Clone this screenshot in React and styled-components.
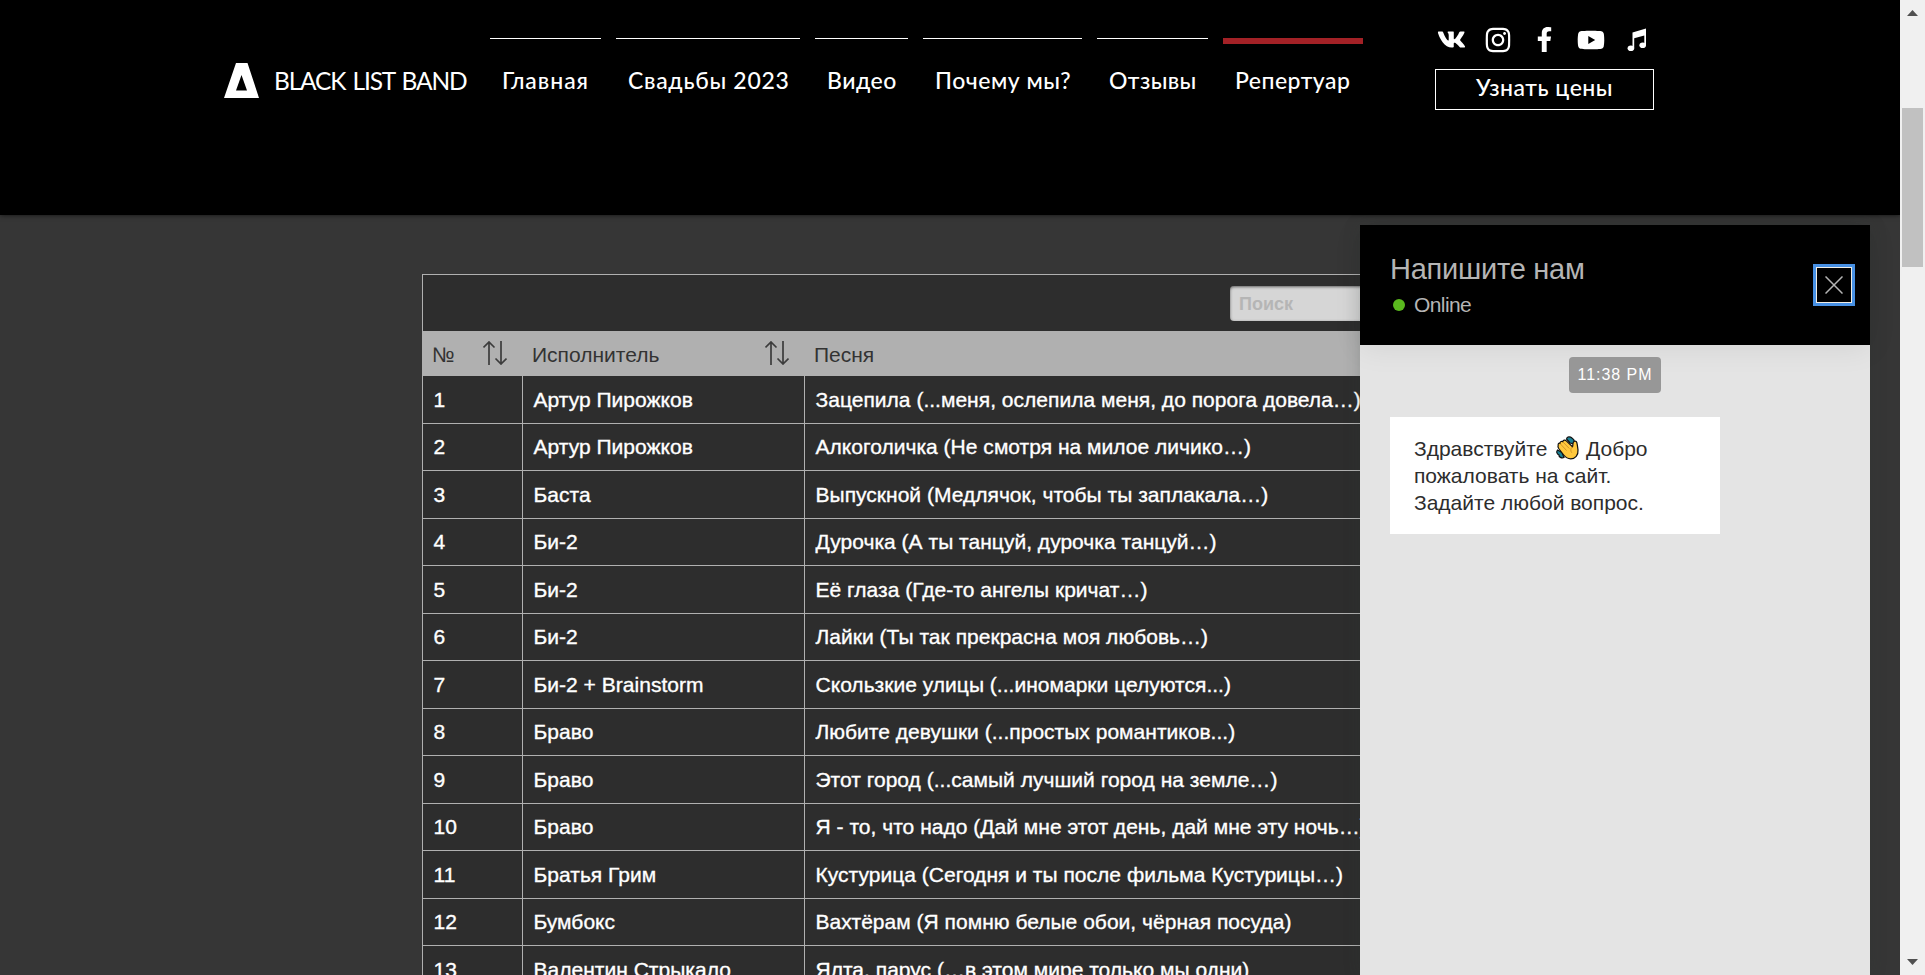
import React from "react";
import styled, { createGlobalStyle } from "styled-components";
import { FaVk, FaInstagram, FaFacebookF, FaYoutube } from "react-icons/fa";

const Global = createGlobalStyle`
  * { box-sizing: border-box; }
  body { margin: 0; overflow: hidden; background: #363636; font-family: "Liberation Sans", Arial, sans-serif; }
`;

const Window = styled.div`
  display: flex;
  position: relative;
  width: 100%;
  height: 975px;
  overflow: hidden;
`;
const Page = styled.div`
  flex: 1;
  min-width: 0;
  display: flex;
  flex-direction: column;
  background: #363636;
  overflow: hidden;
`;
const Header = styled.header`
  flex: none;
  height: 215px;
  display: flex;
  align-items: flex-start;
  padding-left: 224px;
  background: #000;
  color: #fff;
  box-shadow: 0 0 5px rgba(0, 0, 0, 0.7);
`;
const Brand = styled.div`
  display: flex;
  width: 266px;
  padding-top: 63px;
  gap: 15px;
`;
const BrandName = styled.span`
  font: 400 24.5px/36px Lato, sans-serif;
  letter-spacing: -1.15px;
  word-spacing: 2px;
  white-space: nowrap;
`;
const Nav = styled.nav`
  display: flex;
  gap: 15px;
  padding-top: 38px;
`;
const NavItem = styled.a`
  width: ${(p) => p.$w}px;
  height: 60px;
  border-top: ${(p) => (p.$active ? "6px solid #a32126" : "1px solid #fff")};
  padding: ${(p) => (p.$active ? 20 : 25)}px 0 0 12px;
  font: 500 23px/32px Lato, sans-serif;
  letter-spacing: ${(p) => p.$track}px;
  white-space: nowrap;
`;
const Aside = styled.div`
  width: 219px;
  margin-left: 72px;
  padding-top: 26px;
`;
const Socials = styled.div`
  display: flex;
  justify-content: space-between;
  height: 43px;
  padding: 0 2px 0 1px;
`;
const Social = styled.span`
  width: 30px;
  height: 27px;
  display: flex;
  align-items: center;
  justify-content: center;
`;
const PriceButton = styled.button`
  display: block;
  width: 219px;
  height: 41px;
  padding: 0 0 5px;
  border: 1px solid #fff;
  background: #000;
  color: #fff;
  font: 500 23px/32px Lato, sans-serif;
  letter-spacing: 0.5px;
`;

const Table = styled.section`
  width: 1056px;
  margin: 59px 0 0 422px;
  flex: none;
  border: 1px solid #b0b0b0;
  border-bottom: 0;
  background: #2d2d2d;
`;
const SearchBar = styled.div`
  height: 56px;
  display: flex;
  justify-content: flex-end;
  padding: 11px 11px 0 0;
`;
const SearchField = styled.div`
  width: 236px;
  height: 35px;
  border-radius: 4px;
  padding-left: 9px;
  background: #d6d6d6;
  box-shadow: inset 0 1px 3px rgba(0, 0, 0, 0.55);
  color: #b5b5b5;
  font: bold 18px/36px "Liberation Sans", Arial, sans-serif;
`;
const Columns = styled.div`
  display: grid;
  grid-template-columns: 100px 282px 1fr;
`;
const HeadRow = styled(Columns)`
  height: 45px;
  background: #b0b0b0;
  color: #333;
  font-size: 21px;
`;
const HeadCell = styled.div`
  display: flex;
  justify-content: space-between;
  padding: 10px 16px 0 9px;
  line-height: 28px;
`;
const Row = styled(Columns)`
  height: 47.5px;
  border-bottom: 1px solid #b0b0b0;
  color: #fff;
  font-size: 21px;
  line-height: 46px;
  &:nth-child(odd) { line-height: 47px; }
`;
const Cell = styled.div`
  border-right: 1px solid #b0b0b0;
  padding-left: 10.5px;
  letter-spacing: 0.02px;
  white-space: nowrap;
  overflow: hidden;
  -webkit-text-stroke: 0.35px #fff;
  &:last-child { border-right: 0; }
`;

const Chat = styled.aside`
  position: absolute;
  left: 1360px;
  top: 225px;
  width: 510px;
  height: 750px;
  background: #e4e4e4;
  box-shadow: 0 0 16px rgba(45, 56, 52, 0.2);
`;
const ChatHeader = styled.div`
  display: flex;
  justify-content: space-between;
  height: 120px;
  padding: 27px 18px 0 30px;
  background: #000;
  color: #b5b5b5;
  box-shadow: 0 4px 28px rgba(0, 0, 0, 0.07);
`;
const ChatTitle = styled.div`
  font-size: 29px;
  line-height: 34px;
  letter-spacing: -0.25px;
`;
const Status = styled.div`
  display: flex;
  align-items: center;
  gap: 9px;
  margin-top: 5px;
  padding-left: 3px;
  font-size: 21px;
  line-height: 28px;
  letter-spacing: -0.6px;
  &::before {
    content: "";
    width: 12px;
    height: 12px;
    border-radius: 50%;
    background: #5ab91e;
  }
`;
const Close = styled.button`
  width: 36px;
  height: 36px;
  margin-top: 15px;
  padding: 0;
  display: flex;
  align-items: center;
  justify-content: center;
  background: #000;
  border: 1px solid #f0ece4;
  box-shadow: 0 0 0 3px #4790e4;
`;
const Messages = styled.div`
  display: flex;
  flex-direction: column;
  align-items: flex-start;
  padding: 12px 30px;
`;
const Time = styled.span`
  align-self: center;
  width: 92px;
  height: 36px;
  border-radius: 4px;
  background: #979797;
  color: #fff;
  text-align: center;
  font-size: 16px;
  line-height: 36px;
  letter-spacing: 0.95px;
`;
const Bubble = styled.div`
  width: 330px;
  height: 117px;
  margin-top: 24px;
  padding: 18px 24px;
  background: #fff;
  color: #2d2d2d;
  font-size: 21px;
  line-height: 27px;
  white-space: nowrap;
`;
const WaveIcon = styled.svg`
  vertical-align: -4px;
  margin: 0 1px 0 3px;
`;

const Scrollbar = styled.div`
  width: 25px;
  display: flex;
  flex-direction: column;
  align-items: center;
  background: #f0f0f0;
  padding: 10px 0;
`;
const Thumb = styled.div`
  width: 21px;
  height: 159px;
  margin: 92px 0 auto;
  background: #c1c1c1;
`;

const Logo = () => (
  <svg width="35" height="36" viewBox="0 0 35 36">
    <path fill="#fff" fillRule="evenodd" d="M12 0h11.500l11.500 35H0zM17.500 12l-5.500 15.500h11z" />
  </svg>
);
const SortArrows = () => (
  <svg width="24" height="24" viewBox="0 0 24 24" fill="none" stroke="#3c3c3c" strokeWidth="1.700">
    <path d="M6 24V1M.5 6.500L6 1l5.500 5.500M18 0v23M12.500 17.500L18 23l5.500-5.500" />
  </svg>
);
const Notes = () => (
  <svg width="20" height="24" viewBox="0 0 20 24" fill="#fff">
    <path d="M5.500 4.500L19 .5V17h-1.700V7.500L7.200 10.300V20H5.500z" />
    <ellipse cx="3.900" cy="20.300" rx="3.300" ry="2.800" />
    <ellipse cx="15.700" cy="17.200" rx="3.300" ry="2.800" />
  </svg>
);
const Wave = () => (
  <WaveIcon width="23" height="24" viewBox="0 0 23 24">
    <path fill="#1b8296" stroke="#111" strokeWidth="1.200" d="M10.500 3C11 .5 14 .3 16 2c2 1.300 3 3.500 2 6l-4-1zM1.500 14c-1.500 2-.5 4 1.500 5-.3 2 2.500 3.500 5 2.500l-2-5z" />
    <path fill="#ffc83d" stroke="#111" strokeWidth="1.200" strokeLinejoin="round" d="M2.200 9C1.800 7.500 3 6.800 4 7.500 3.800 5.800 5.300 4.800 6.700 5.700 7 4 9 3.500 10.300 4.800l6.200 6c.6-1.500.2-3 .8-4.500.8-1.800 3-1.500 3.500.2.6 2 .9 5 1.200 7.500.5 5-2.800 8.800-7.300 8.800-3 0-5-1.300-7-3.800l-5-6.500c-1-1.500-.8-2.700-.5-3.500z" />
    <path fill="none" stroke="#c98a22" strokeWidth=".8" d="M4.200 7.700l6.300 6.800M7 6l6.300 6.500M16.500 10.800c-2 1.500-2.300 4-.7 6" />
  </WaveIcon>
);
const Triangle = ({ down }) => (
  <svg width="11" height="6" viewBox="0 0 11 6">
    <path fill="#505050" d={down ? "M0 0h11L5.500 6z" : "M0 6h11L5.500 0z"} />
  </svg>
);

const NAV = [
  ["Главная", 111, 0.95],
  ["Свадьбы 2023", 184, 0.72],
  ["Видео", 93, 0.5],
  ["Почему мы?", 159, 0.52],
  ["Отзывы", 111, 0.4],
  ["Репертуар", 140, 0.48],
];
const SONGS = [
  ["Артур Пирожков", "Зацепила (...меня, ослепила меня, до порога довела…)"],
  ["Артур Пирожков", "Алкоголичка (Не смотря на милое личико…)"],
  ["Баста", "Выпускной (Медлячок, чтобы ты заплакала…)"],
  ["Би-2", "Дурочка (А ты танцуй, дурочка танцуй…)"],
  ["Би-2", "Её глаза (Где-то ангелы кричат…)"],
  ["Би-2", "Лайки (Ты так прекрасна моя любовь…)"],
  ["Би-2 + Brainstorm", "Скользкие улицы (...иномарки целуются...)"],
  ["Браво", "Любите девушки (...простых романтиков...)"],
  ["Браво", "Этот город (...самый лучший город на земле…)"],
  ["Браво", "Я - то, что надо (Дай мне этот день, дай мне эту ночь…)"],
  ["Братья Грим", "Кустурица (Сегодня и ты после фильма Кустурицы…)"],
  ["Бумбокс", "Вахтёрам (Я помню белые обои, чёрная посуда)"],
  ["Валентин Стрыкало", "Ялта, парус (…в этом мире только мы одни)"],
];

export default function App() {
  return (
    <Window>
      <Global />
      <Page>
        <Header>
          <Brand>
            <Logo />
            <BrandName>BLACK LIST BAND</BrandName>
          </Brand>
          <Nav>
            {NAV.map(([label, w, track], i) => (
              <NavItem key={label} $w={w} $track={track} $active={i === 5}>{label}</NavItem>
            ))}
          </Nav>
          <Aside>
            <Socials>
              <Social><FaVk size={29} /></Social>
              <Social><FaInstagram size={28} /></Social>
              <Social><FaFacebookF size={25} /></Social>
              <Social><FaYoutube size={28} /></Social>
              <Social><Notes /></Social>
            </Socials>
            <PriceButton>Узнать цены</PriceButton>
          </Aside>
        </Header>
        <Table>
          <SearchBar><SearchField>Поиск</SearchField></SearchBar>
          <HeadRow>
            <HeadCell>№<SortArrows /></HeadCell>
            <HeadCell>Исполнитель<SortArrows /></HeadCell>
            <HeadCell>Песня</HeadCell>
          </HeadRow>
          {SONGS.map(([artist, song], i) => (
            <Row key={song}>
              <Cell>{i + 1}</Cell>
              <Cell>{artist}</Cell>
              <Cell>{song}</Cell>
            </Row>
          ))}
        </Table>
      </Page>
      <Scrollbar>
        <Triangle />
        <Thumb />
        <Triangle down />
      </Scrollbar>
      <Chat>
        <ChatHeader>
          <div>
            <ChatTitle>Напишите нам</ChatTitle>
            <Status>Online</Status>
          </div>
          <Close aria-label="Закрыть">
            <svg width="18" height="18" viewBox="0 0 18 18" stroke="#b5b5b5" strokeWidth="1.500">
              <path d="M.5.5l17 17M17.500.5l-17 17" />
            </svg>
          </Close>
        </ChatHeader>
        <Messages>
          <Time>11:38 PM</Time>
          <Bubble>
            Здравствуйте <Wave /> Добро<br />
            пожаловать на сайт.<br />
            Задайте любой вопрос.
          </Bubble>
        </Messages>
      </Chat>
    </Window>
  );
}
